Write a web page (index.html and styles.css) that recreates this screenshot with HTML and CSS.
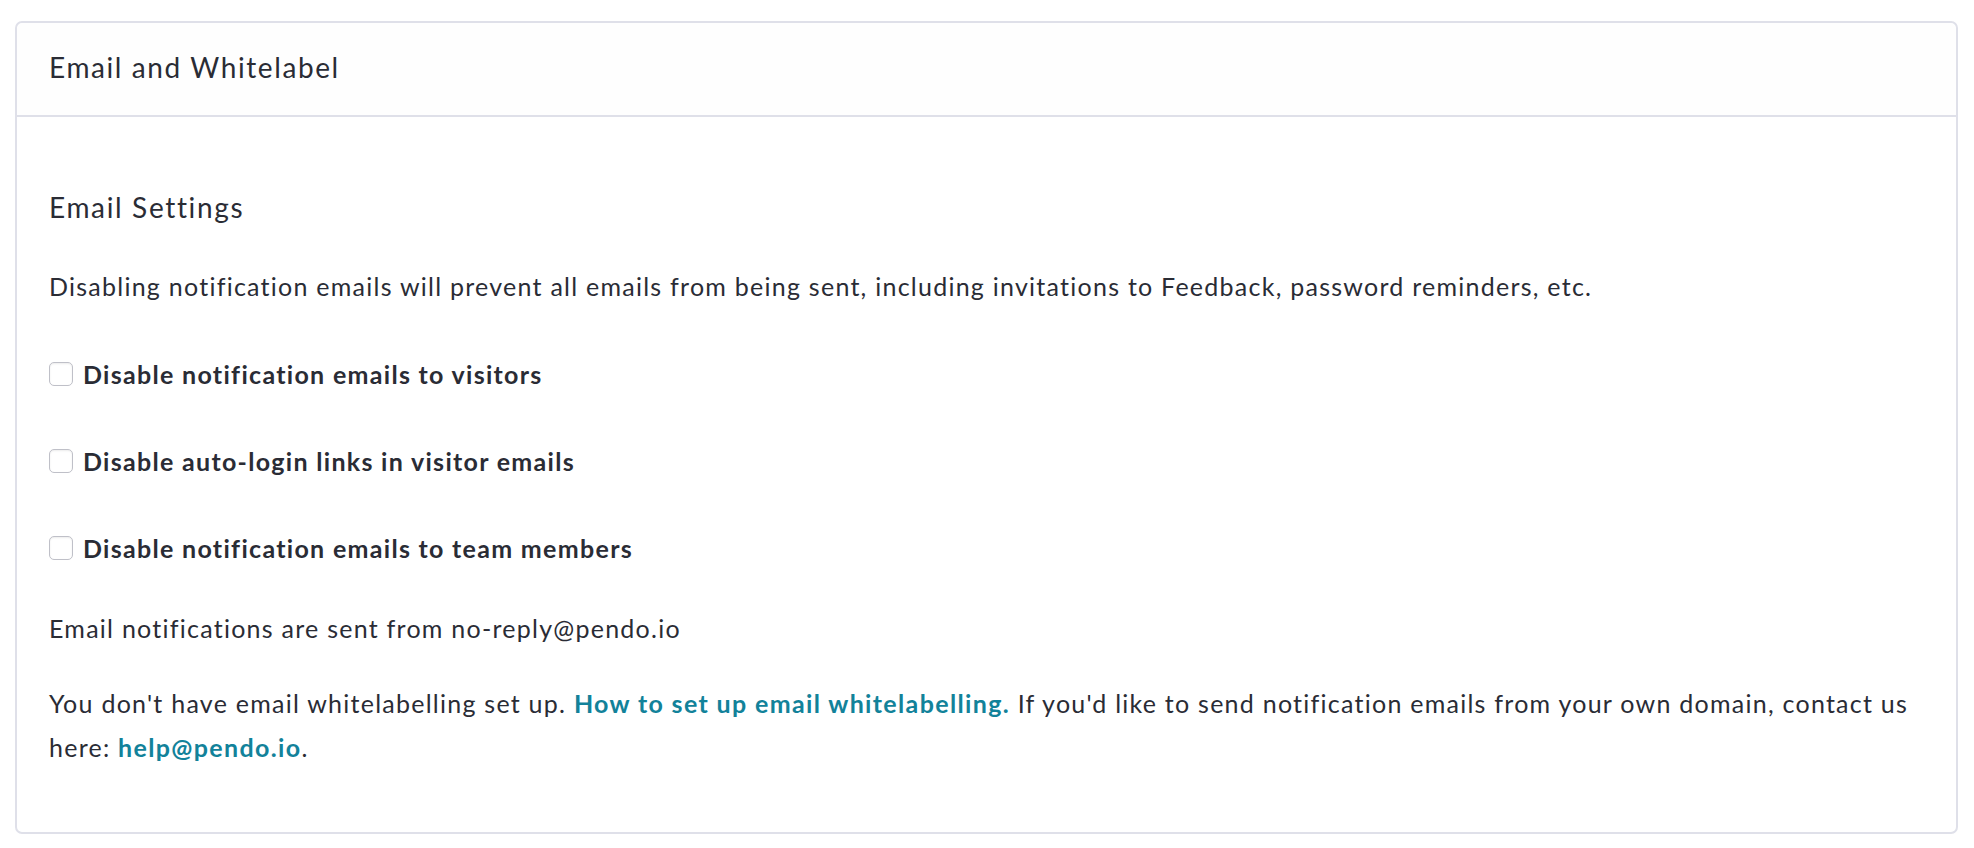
FILE: index.html
```html
<!DOCTYPE html>
<html lang="en">
<head>
<meta charset="utf-8">
<title>Email and Whitelabel</title>
<link rel="stylesheet" href="styles.css">
</head>
<body>
<section class="card">
  <header class="card-header">
    <h2 class="card-title">Email and Whitelabel</h2>
  </header>
  <div class="card-body">
    <h3 class="section-title">Email Settings</h3>
    <p class="text intro">Disabling notification emails will prevent all emails from being sent, including invitations to Feedback, password reminders, etc.</p>
    <label class="check-row first"><input type="checkbox" class="check"><span class="check-label">Disable notification emails to visitors</span></label>
    <label class="check-row"><input type="checkbox" class="check"><span class="check-label">Disable auto-login links in visitor emails</span></label>
    <label class="check-row"><input type="checkbox" class="check"><span class="check-label">Disable notification emails to team members</span></label>
    <p class="text sender">Email notifications are sent from no-reply@pendo.io</p>
    <p class="text whitelabel">You don't have email whitelabelling set up. <a class="link" href="#">How to set up email whitelabelling.</a> If you'd like to send notification emails from your own domain, contact us here: <a class="link" href="#">help@pendo.io</a>.</p>
  </div>
</section>
</body>
</html>
```

FILE: styles.css
```css
html, body {
  margin: 0;
  padding: 0;
  background: #ffffff;
}

body {
  font-family: "Lato", "Liberation Sans", sans-serif;
  color: #2a2c35;
  font-variant-ligatures: none;
}

.card {
  margin: 21px 16px 0 15px;
  border: 2px solid #dfe0e9;
  border-radius: 7px;
  background: #ffffff;
}

.card-header {
  height: 94px;
  padding: 0 32px 4px;
  box-sizing: border-box;
  display: flex;
  align-items: center;
  background: #fefefe;
  border-bottom: 2px solid #dfe0e9;
  border-radius: 7px 7px 0 0;
}

.card-title {
  margin: 0;
  font-size: 28px;
  font-weight: 400;
  line-height: 40px;
  letter-spacing: 1.6px;
}

.card-body {
  padding: 70px 32px 63px;
  display: flex;
  flex-direction: column;
}

.section-title {
  margin: 0;
  font-size: 28px;
  font-weight: 400;
  line-height: 40px;
  letter-spacing: 1.65px;
}

.text {
  margin: 0;
  font-size: 25px;
  line-height: 44px;
  letter-spacing: 1.25px;
}

.intro {
  margin-top: 37px;
}

.check-row {
  display: flex;
  align-items: center;
  gap: 10px;
  height: 44px;
  margin-top: 43px;
  cursor: pointer;
}

.check-row.first {
  margin-top: 44px;
}

.check {
  appearance: none;
  -webkit-appearance: none;
  margin: 0;
  width: 24px;
  height: 24px;
  border: 1.5px solid #bfc0c8;
  border-radius: 5px;
  background: #ffffff;
  box-shadow: inset 0 1px 2px rgba(0, 0, 0, 0.08);
}

.check-label {
  font-size: 25px;
  font-weight: 700;
  letter-spacing: 1.3px;
}

.sender {
  margin-top: 36px;
}

.whitelabel {
  margin-top: 31px;
}

.link {
  color: #12829a;
  font-weight: 700;
  text-decoration: none;
  letter-spacing: 1.35px;
}
```
